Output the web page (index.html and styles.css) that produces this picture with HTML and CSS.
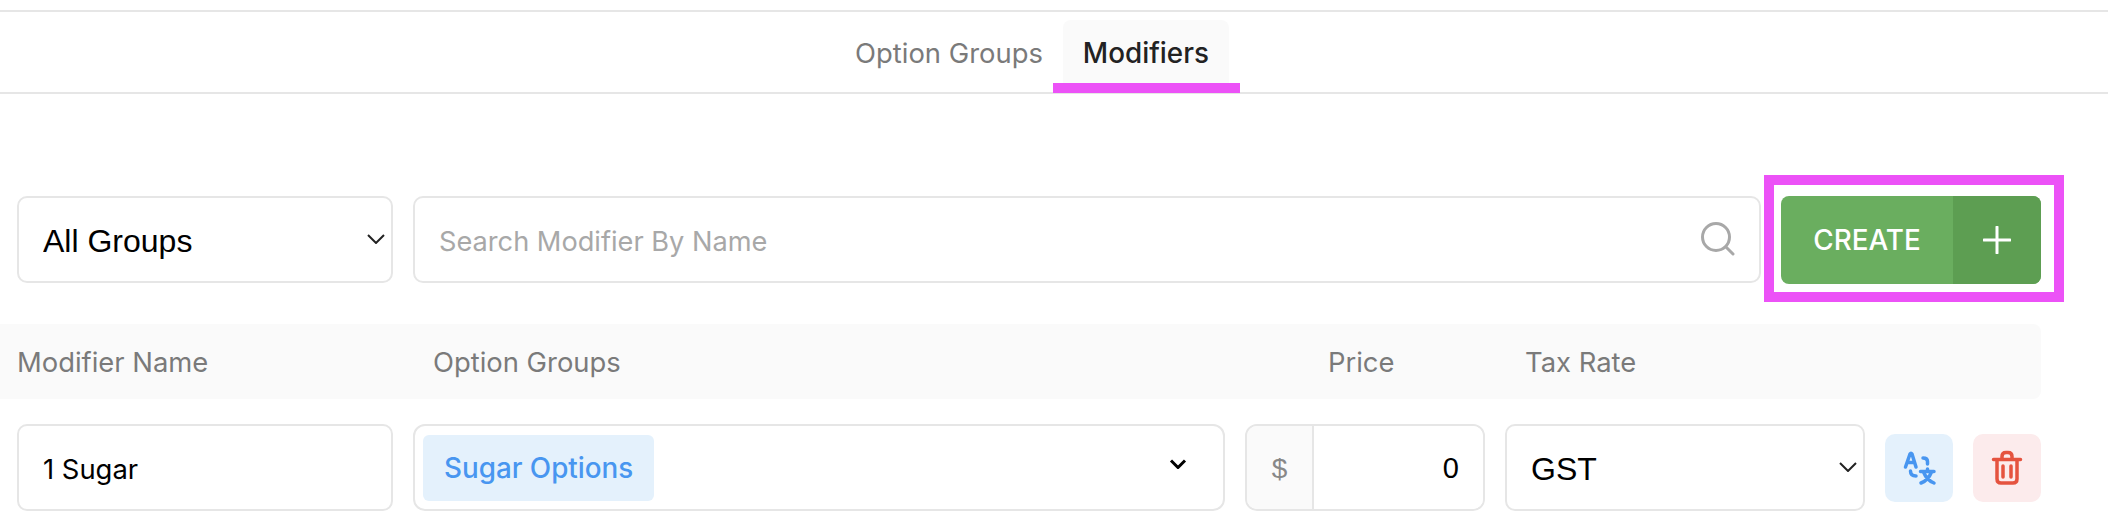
FILE: index.html
```html
<!DOCTYPE html>
<html lang="en">
<head>
    <meta charset="UTF-8">
    <meta name="viewport" content="width=device-width, initial-scale=1.0">
    <title>Modifiers</title>
    <link rel="stylesheet" href="styles.css">
</head>
<body>
    <nav class="tabs">
        <a class="tab" href="#">Option Groups</a>
        <a class="tab active" href="#">Modifiers</a>
    </nav>

    <main class="content">
        <div class="toolbar">
            <div class="select-wrap group-filter">
                <select class="field">
                    <option>All Groups</option>
                </select>
                <svg class="chevron" viewBox="0 0 18 10"><path d="M1 1l8 8 8-8"/></svg>
            </div>
            <div class="search">
                <input type="text" placeholder="Search Modifier By Name">
                <svg class="search-icon" viewBox="0 0 34 34"><circle cx="15" cy="15" r="13.5"/><path d="M25 25l7 7"/></svg>
            </div>
            <button class="create">
                <span class="create-label">CREATE</span>
                <span class="create-plus">
                    <svg viewBox="0 0 28 28"><path d="M14 1v26M1 14h26"/></svg>
                </span>
            </button>
        </div>

        <div class="table-head">
            <div class="col-name">Modifier Name</div>
            <div class="col-groups">Option Groups</div>
            <div class="col-price">Price</div>
            <div class="col-tax">Tax Rate</div>
        </div>

        <div class="row">
            <input class="field col-name-input" type="text" value="1 Sugar">
            <div class="multi">
                <span class="tag">Sugar Options</span>
                <svg class="chevron bold" viewBox="0 0 18 10"><path d="M2 1.500l7 7 7-7"/></svg>
            </div>
            <div class="price">
                <span class="price-unit">$</span>
                <input type="text" value="0">
            </div>
            <div class="select-wrap tax">
                <select class="field">
                    <option>GST</option>
                </select>
                <svg class="chevron" viewBox="0 0 18 10"><path d="M1 1l8 8 8-8"/></svg>
            </div>
            <button class="icon-btn translate">
                <svg viewBox="0 0 68 68">
                    <path d="M20.500 33L25 20q1-1.500 2 0L31 33M22.500 28.500h7"/>
                    <path d="M38 24c3 0 4.500 1.500 4.500 3.500v2.500M25.500 37c0 3 1.500 5 5.500 5"/>
                    <path d="M35.500 37.500H49M42.500 35v2.500M38.500 38c2 5 5.500 9 10.500 11M46.500 38c-2 5-5 9-10.500 11"/>
                </svg>
            </button>
            <button class="icon-btn delete">
                <svg viewBox="0 0 68 68">
                    <path d="M20.500 25.500h27M24 25.500V45c0 2.500 1.500 4 4 4h12c2.500 0 4-1.500 4-4V25.500M29 25v-2.500c0-2.500 1.500-4 4-4h2c2.500 0 4 1.500 4 4V25M30 32v11M38 32v11"/>
                </svg>
            </button>
        </div>
    </main>
</body>
</html>
```

FILE: styles.css
```css
* {
    box-sizing: border-box;
}
body {
    margin: 0;
    font-family: Inter, "Liberation Sans", sans-serif;
    background-color: white;
    color: #222;
}
.tabs {
    display: flex;
    justify-content: center;
    height: 84px;
    margin-top: 10px;
    border-top: 2px solid #e6e6e6;
    border-bottom: 2px solid #e6e6e6;
    padding-top: 8px;
    padding-right: 44px;
}
.tab {
    position: relative;
    display: flex;
    align-items: center;
    height: 63px;
    padding: 2px 20px 0;
    font-size: 27.4px;
    color: #7a7a7a;
    text-decoration: none;
    border-radius: 8px 8px 0 0;
}
.tab.active {
    background-color: #fafafa;
    color: #222;
    font-size: 27.8px;
    font-weight: 500;
}
.tab.active::after {
    content: "";
    position: absolute;
    left: -10px;
    right: -11px;
    top: 63px;
    height: 10px;
    background-color: #ec52f7;
}
.content {
    padding: 102px 67px 0 0;
}
.toolbar {
    display: flex;
    gap: 20px;
    padding-left: 17px;
}
.field {
    width: 100%;
    height: 87px;
    border: 2px solid #e6e6e6;
    border-radius: 10px;
    background-color: white;
    padding: 3px 24px 0;
    font-family: "Liberation Sans", sans-serif;
    font-size: 32px;
    color: black;
    appearance: none;
    outline: none;
}
.select-wrap {
    position: relative;
}
.group-filter {
    width: 376px;
}
.chevron {
    position: absolute;
    fill: none;
    stroke: #222;
    stroke-width: 2;
    width: 18px;
    height: 10px;
    right: 8px;
    top: 38px;
}
.chevron.bold {
    stroke: black;
    stroke-width: 3;
    right: 36px;
    top: 33px;
}
.search {
    position: relative;
    width: 1348px;
}
.search input {
    width: 100%;
    height: 87px;
    border: 2px solid #e6e6e6;
    border-radius: 10px;
    padding: 4px 24px 0;
    font-family: Inter, sans-serif;
    font-size: 27.2px;
    outline: none;
}
.search input::placeholder {
    color: #a8a8a8;
}
.search-icon {
    position: absolute;
    right: 26px;
    top: 26px;
    width: 34px;
    height: 34px;
    fill: none;
    stroke: #a8a8a8;
    stroke-width: 3;
    stroke-linecap: round;
}
.create {
    position: relative;
    display: flex;
    width: 260px;
    height: 88px;
    padding: 0;
    border: none;
    border-radius: 8px;
    background-color: #6aae5f;
    color: white;
    font-family: Inter, sans-serif;
    font-size: 27.8px;
    font-weight: 500;
}
.create::after {
    content: "";
    position: absolute;
    left: -17px;
    right: -23px;
    top: -21px;
    bottom: -18px;
    border: 10px solid #ec52f7;
}
.create-label {
    flex: 1;
    align-self: center;
    text-align: center;
}
.create-plus {
    display: flex;
    align-items: center;
    justify-content: center;
    width: 88px;
    background-color: #5d9e52;
    border-radius: 0 8px 8px 0;
}
.create-plus svg {
    width: 28px;
    height: 28px;
    fill: none;
    stroke: white;
    stroke-width: 3;
    stroke-linecap: round;
}
.table-head {
    display: flex;
    align-items: center;
    height: 75px;
    margin-top: 40px;
    background-color: #fafafa;
    border-radius: 0 8px 8px 0;
    font-size: 27.4px;
    color: #7a7a7a;
}
.col-name {
    width: 433px;
    padding-left: 17px;
}
.col-groups {
    width: 895px;
}
.col-price {
    width: 197px;
}
.row {
    display: flex;
    align-items: center;
    gap: 20px;
    margin-top: 25px;
    padding-left: 17px;
}
.col-name-input {
    width: 376px;
    font-family: Inter, sans-serif;
    font-size: 27.4px;
    padding: 2px 24px 0;
}
.multi {
    position: relative;
    display: flex;
    align-items: center;
    width: 812px;
    height: 87px;
    border: 2px solid #e6e6e6;
    border-radius: 12px;
    padding-left: 8px;
}
.tag {
    display: flex;
    align-items: center;
    height: 66px;
    padding: 0 21px;
    background-color: #e4f1fc;
    border-radius: 6px;
    font-size: 27.8px;
    font-weight: 500;
    color: #4896f0;
}
.price {
    display: flex;
    width: 240px;
    height: 87px;
    border: 2px solid #e6e6e6;
    border-radius: 12px;
    overflow: hidden;
}
.price-unit {
    display: flex;
    align-items: center;
    justify-content: center;
    width: 67px;
    padding-top: 2px;
    background-color: #fafafa;
    border-right: 2px solid #e6e6e6;
    font-family: "Liberation Sans", sans-serif;
    font-size: 28px;
    color: #888;
}
.price input {
    flex: 1;
    min-width: 0;
    border: none;
    outline: none;
    padding: 2px 24px 0 0;
    text-align: right;
    font-family: "Liberation Sans", sans-serif;
    font-size: 29px;
    color: black;
}
.tax {
    width: 360px;
}
.icon-btn {
    display: flex;
    width: 68px;
    height: 68px;
    padding: 0;
    border: none;
    border-radius: 10px;
}
.icon-btn svg {
    width: 68px;
    height: 68px;
    fill: none;
    stroke-width: 3.5;
    stroke-linecap: round;
    stroke-linejoin: round;
}
.translate {
    background-color: #e4f1fc;
}
.translate svg {
    stroke: #4896f0;
}
.delete {
    background-color: #fcebec;
}
.delete svg {
    stroke: #e5533f;
}
```
